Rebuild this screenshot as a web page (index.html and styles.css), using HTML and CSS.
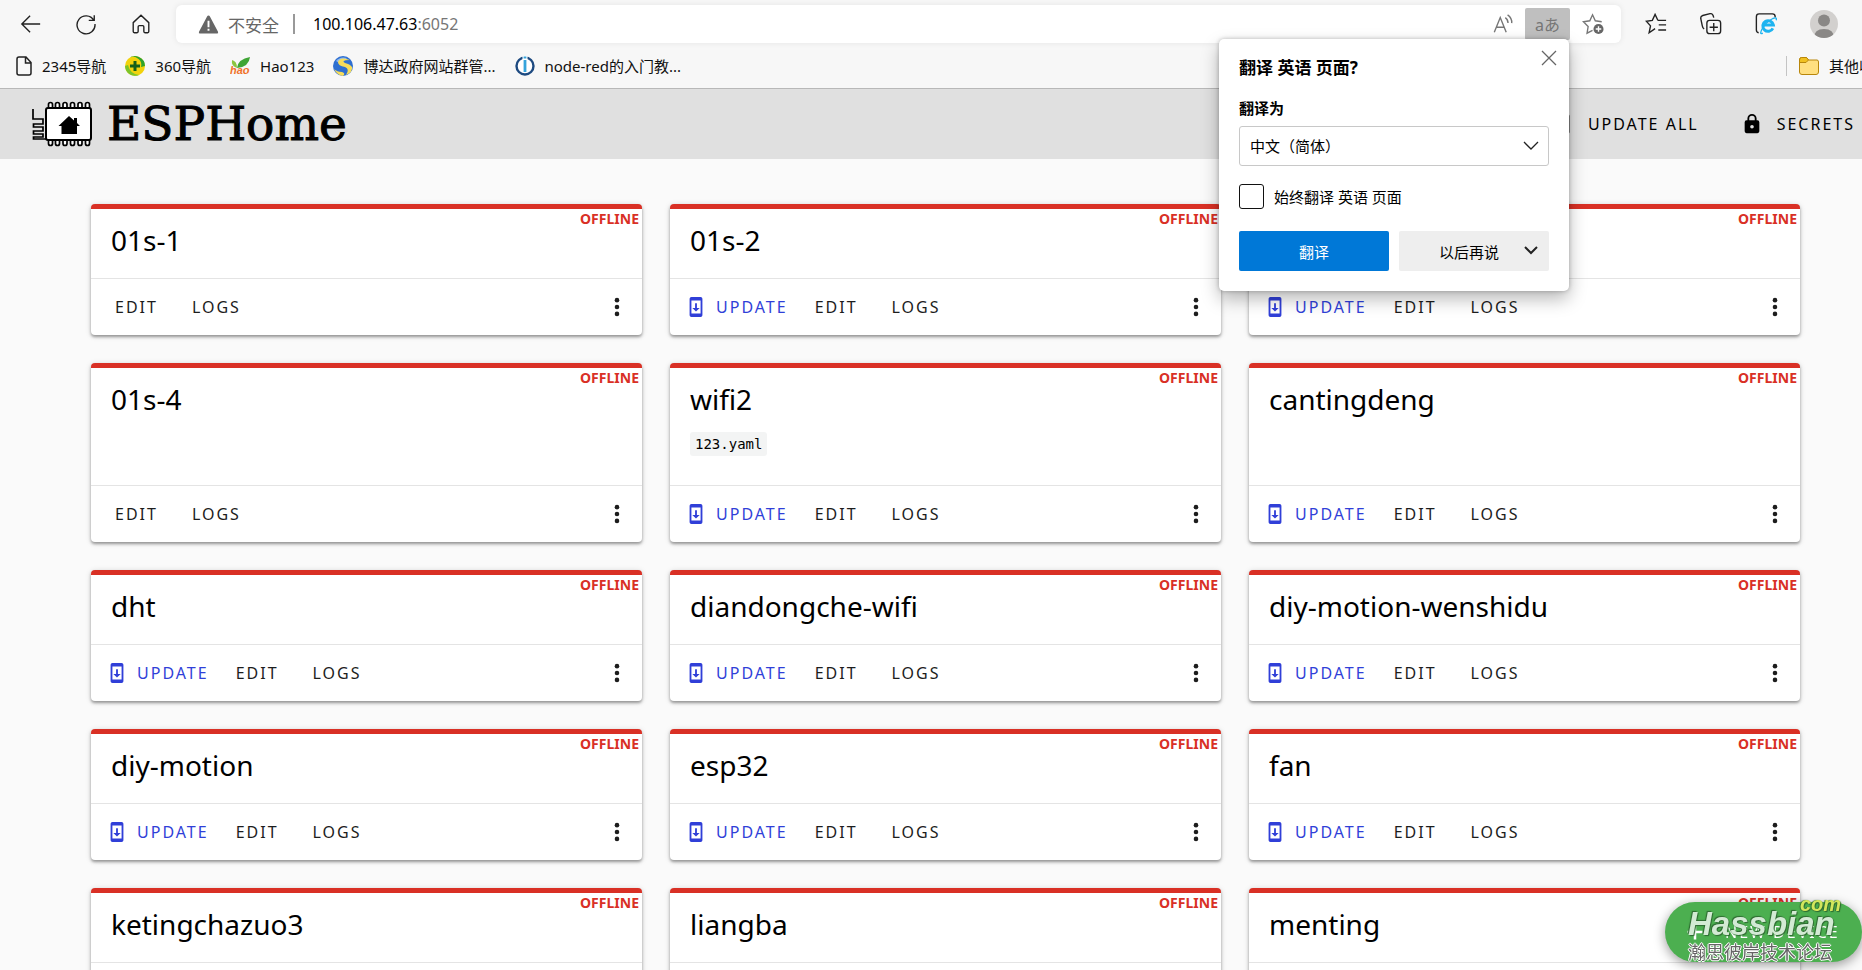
FILE: index.html
```html
<!DOCTYPE html>
<html lang="zh-CN">
<head>
<meta charset="utf-8">
<title>ESPHome</title>
<link rel="stylesheet" href="styles.css">
</head>
<body>
<svg class="defs" aria-hidden="true">
  <symbol id="i-update" viewBox="0 0 24 24"><path fill="currentColor" d="M17 1H7a2 2 0 0 0-2 2v18a2 2 0 0 0 2 2h10a2 2 0 0 0 2-2V3a2 2 0 0 0-2-2zm0 18H7V5h10v14zm-1-6h-3V8h-2v5H8l4 4 4-4z"/></symbol>
  <symbol id="i-dots" viewBox="0 0 24 24"><g fill="currentColor"><circle cx="12" cy="4.500" r="2.500"/><circle cx="12" cy="12" r="2.500"/><circle cx="12" cy="19.500" r="2.500"/></g></symbol>
</svg>

<div class="browser">
  <div class="toolbar">
    <button class="nav" aria-label="返回"><svg viewBox="0 0 24 24"><path d="M22 12H2.500M11 3l-9 9 9 9"/></svg></button>
    <button class="nav" aria-label="刷新"><svg viewBox="0 0 24 24"><path d="M20.500 8A9.800 9.800 0 1 0 21.800 12M21 2.500V8h-6"/></svg></button>
    <button class="nav" aria-label="主页"><svg viewBox="0 0 24 24"><path d="M3.500 10.500 12 2.500l8.500 8v9.800q0 1.200-1.200 1.200h-3q-1.200 0-1.200-1.200V15q0-1.200-1.200-1.200h-3.800q-1.200 0-1.200 1.200v5.300q0 1.200-1.200 1.200h-3q-1.200 0-1.200-1.200z"/></svg></button>
    <div class="address">
      <svg class="warn" viewBox="0 0 22 20"><path fill="#666" d="M11 .500q1 0 1.500 1L21 17.500q.800 2-1.200 2H2.200q-2 0-1.200-2L9.500 1.500q.500-1 1.500-1z"/><path stroke="#fff" stroke-width="2" d="M11 6v7M11 14.500v2"/></svg>
      <span class="insecure">不安全</span>
      <span class="bar"></span>
      <span class="url">100.106.47.63<span class="port">:6052</span></span>
      <button class="tool" aria-label="朗读"><svg viewBox="0 0 24 24"><path d="M2.500 21 9 5l6.500 16M5 15.500h8M14.500 5q3 2 3 6M17 2q5 3.500 4.500 9"/></svg></button>
      <button class="tool translate" aria-label="翻译">aあ</button>
      <button class="tool" aria-label="收藏"><svg viewBox="0 0 24 24"><path d="m11.500 19-6 3 1.200-7.200L1.500 9.500l7-1L11.500 2l3 6.500 7 1"/><circle cx="18" cy="17.500" r="5.500" fill="#666" stroke="none"/><path stroke="#fff" d="M18 14.500v6M15 17.500h6"/></svg></button>
    </div>
    <button class="nav" aria-label="收藏夹"><svg viewBox="0 0 24 24"><path d="m11 17-6.500 4.500L6 14 1.500 9l6.500-1L11 1.500 14 8M14 8h9M15 13h8M14.500 18.500h8.500"/></svg></button>
    <button class="nav" aria-label="集锦"><svg viewBox="0 0 24 24"><rect x="7.500" y="8" width="15" height="14.500" rx="3"/><path d="M15 11v9M10.500 15.500h9M4.500 17.500Q3 16.500 2.500 14L.800 6Q.500 3.500 3 2.700l8-2Q13.500.500 14.300 2.700l.700 2.300"/></svg></button>
    <button class="nav" aria-label="IE 模式"><svg viewBox="0 0 24 24"><path d="M4 21.500Q1.500 21 1.500 18.500V4q0-3 3-3H19q3 0 3 3v1"/><path d="M19.500 16.800A5.800 5.800 0 1 1 20 13H9.500" stroke="#1eb4f0" stroke-width="3.200"/><path d="M8.500 22q-4 2-1-4 4-8 12-12 5-2 3.500 2" stroke="#1eb4f0" stroke-width="1.500"/></svg></button>
    <button class="nav profile" aria-label="个人资料"><svg viewBox="0 0 28 28"><clipPath id="av"><circle cx="14" cy="14" r="14"/></clipPath><g clip-path="url(#av)" stroke="none"><path fill="#d2d0ce" d="M0 0h28v28H0z"/><circle cx="14" cy="10.500" r="6" fill="#8a8886"/><path fill="#8a8886" d="M4 28q0-9 10-9t10 9z"/></g></svg></button>
  </div>
  <nav class="bookmarks">
    <a href="#"><svg class="page" viewBox="0 0 16 20"><path fill="none" stroke="#222" stroke-width="1.500" d="M3 1h7l5 5.500V17q0 2-2 2H3q-2 0-2-2V3q0-2 2-2zM9.500 1v6H15"/></svg>2345导航</a>
    <a href="#"><svg viewBox="0 0 20 20"><circle cx="10" cy="10" r="10" fill="#f2d20c"/><path fill="#2fa32c" d="M3 3A10 10 0 0 1 20 10l-4 1A8 8 0 0 0 3 3z"/><path fill="#7cc42a" d="M0 10a10 10 0 0 0 14 9Q5 18 3 9z"/><path stroke="#14601a" stroke-width="3" d="M10 5v10M5 10h10"/></svg>360导航</a>
    <a href="#"><svg viewBox="0 0 20 20"><path fill="#3fa535" d="M7 12Q8 3 20 1q-1 10-13 11z"/><path fill="#8cc63f" d="M7 12Q1 10 2 4q5 1 5 8z"/><text class="hao" x="0" y="18">hao</text></svg>Hao123</a>
    <a href="#"><svg viewBox="0 0 20 20"><circle cx="10" cy="10" r="10" fill="#2f6fd0"/><path fill="#8fb9ee" d="M3 5Q7 0 14 2L8 8z"/><path fill="#f7dc5a" d="M17 4Q7 0 5 6q0 4 7 5 5 2 1 8 7-3 6-8-2-3-7-4-5-3 5-3zM1 13q3 6 9 7 3-3-1-4-5 0-8-3z"/></svg>博达政府网站群管...</a>
    <a href="#"><svg viewBox="0 0 20 20"><circle cx="10" cy="10" r="8.500" fill="#fff" stroke="#1d4a80" stroke-width="2.400"/><path stroke="#fff" stroke-width="5" d="M10 0v4"/><path stroke="#35a4dc" stroke-width="2.800" d="M10 4v12M10 .500v2"/></svg>node-red的入门教...</a>
    <a class="others" href="#"><svg viewBox="0 0 20 18"><path fill="#ffdf80" stroke="#b8860b" d="M.500 3q0-2.500 2-2.500h5L9.500 3H18q1.500 0 1.500 2v10q0 2.500-2.500 2.500H3Q.500 17.500.500 15z"/><path fill="#f0c020" stroke="#b8860b" d="M.500 5.500V3q0-2.500 2-2.500h5L9.500 3l-2.500 2.500z"/></svg>其他收藏夹</a>
  </nav>
</div>

<header class="app-header">
  <a class="brand" href="#">
    <svg viewBox="0 0 60 46"><g fill="none" stroke="#000" stroke-width="1.700"><path d="M1 8v10h10v5H1.500v3H11v4H1.500v3H11v3H1.500v2H14M11 18v5"/><g id="pins" fill="#fff"><path d="M16.500 8V3.500q0-2 2-2t2 2V8M23.500 8V3.500q0-2 2-2t2 2V8M31 8V3.500q0-2 2-2t2 2V8M38.500 8V3.500q0-2 2-2t2 2V8M46 8V3.500q0-2 2-2t2 2V8M53.500 8V3.500q0-2 2-2t2 2V8"/><path d="M16.500 38v4.500q0 2 2 2t2-2V38M23.500 38v4.500q0 2 2 2t2-2V38M31 38v4.500q0 2 2 2t2-2V38M38.500 38v4.500q0 2 2 2t2-2V38M46 38v4.500q0 2 2 2t2-2V38M53.500 38v4.500q0 2 2 2t2-2V38"/></g><rect x="14" y="7" width="45" height="32" rx="2" fill="#fff" stroke-width="2"/></g><path d="m37 15 5 4.500V17h3v5l3 3h-3v8H29.500v-8h-3z"/></svg>
    <span>ESPHome</span>
  </a>
  <div class="header-actions">
    <button><svg><use href="#i-update"/></svg>UPDATE ALL</button>
    <button><svg viewBox="0 0 24 24"><path fill="currentColor" d="M18 8h-1V6A5 5 0 0 0 7 6v2H6a2 2 0 0 0-2 2v10a2 2 0 0 0 2 2h12a2 2 0 0 0 2-2V10a2 2 0 0 0-2-2zm-6 9a2 2 0 1 1 0-4 2 2 0 0 1 0 4zm3-9H9V6a3 3 0 0 1 6 0z"/></svg>SECRETS</button>
  </div>
</header>

<main class="grid">
  <article class="card"><div class="body"><span class="status">OFFLINE</span><h2>01s-1</h2></div><div class="actions"><button>EDIT</button><button>LOGS</button><button class="more" aria-label="More"><svg><use href="#i-dots"/></svg></button></div></article>
  <article class="card"><div class="body"><span class="status">OFFLINE</span><h2>01s-2</h2></div><div class="actions"><button class="update"><svg><use href="#i-update"/></svg>UPDATE</button><button>EDIT</button><button>LOGS</button><button class="more" aria-label="More"><svg><use href="#i-dots"/></svg></button></div></article>
  <article class="card"><div class="body"><span class="status">OFFLINE</span><h2>01s-3</h2></div><div class="actions"><button class="update"><svg><use href="#i-update"/></svg>UPDATE</button><button>EDIT</button><button>LOGS</button><button class="more" aria-label="More"><svg><use href="#i-dots"/></svg></button></div></article>
  <article class="card"><div class="body"><span class="status">OFFLINE</span><h2>01s-4</h2></div><div class="actions"><button>EDIT</button><button>LOGS</button><button class="more" aria-label="More"><svg><use href="#i-dots"/></svg></button></div></article>
  <article class="card"><div class="body"><span class="status">OFFLINE</span><h2>wifi2</h2><code>123.yaml</code></div><div class="actions"><button class="update"><svg><use href="#i-update"/></svg>UPDATE</button><button>EDIT</button><button>LOGS</button><button class="more" aria-label="More"><svg><use href="#i-dots"/></svg></button></div></article>
  <article class="card"><div class="body"><span class="status">OFFLINE</span><h2>cantingdeng</h2></div><div class="actions"><button class="update"><svg><use href="#i-update"/></svg>UPDATE</button><button>EDIT</button><button>LOGS</button><button class="more" aria-label="More"><svg><use href="#i-dots"/></svg></button></div></article>
  <article class="card"><div class="body"><span class="status">OFFLINE</span><h2>dht</h2></div><div class="actions"><button class="update"><svg><use href="#i-update"/></svg>UPDATE</button><button>EDIT</button><button>LOGS</button><button class="more" aria-label="More"><svg><use href="#i-dots"/></svg></button></div></article>
  <article class="card"><div class="body"><span class="status">OFFLINE</span><h2>diandongche-wifi</h2></div><div class="actions"><button class="update"><svg><use href="#i-update"/></svg>UPDATE</button><button>EDIT</button><button>LOGS</button><button class="more" aria-label="More"><svg><use href="#i-dots"/></svg></button></div></article>
  <article class="card"><div class="body"><span class="status">OFFLINE</span><h2>diy-motion-wenshidu</h2></div><div class="actions"><button class="update"><svg><use href="#i-update"/></svg>UPDATE</button><button>EDIT</button><button>LOGS</button><button class="more" aria-label="More"><svg><use href="#i-dots"/></svg></button></div></article>
  <article class="card"><div class="body"><span class="status">OFFLINE</span><h2>diy-motion</h2></div><div class="actions"><button class="update"><svg><use href="#i-update"/></svg>UPDATE</button><button>EDIT</button><button>LOGS</button><button class="more" aria-label="More"><svg><use href="#i-dots"/></svg></button></div></article>
  <article class="card"><div class="body"><span class="status">OFFLINE</span><h2>esp32</h2></div><div class="actions"><button class="update"><svg><use href="#i-update"/></svg>UPDATE</button><button>EDIT</button><button>LOGS</button><button class="more" aria-label="More"><svg><use href="#i-dots"/></svg></button></div></article>
  <article class="card"><div class="body"><span class="status">OFFLINE</span><h2>fan</h2></div><div class="actions"><button class="update"><svg><use href="#i-update"/></svg>UPDATE</button><button>EDIT</button><button>LOGS</button><button class="more" aria-label="More"><svg><use href="#i-dots"/></svg></button></div></article>
  <article class="card"><div class="body"><span class="status">OFFLINE</span><h2>ketingchazuo3</h2></div><div class="actions"></div></article>
  <article class="card"><div class="body"><span class="status">OFFLINE</span><h2>liangba</h2></div><div class="actions"></div></article>
  <article class="card"><div class="body"><span class="status">OFFLINE</span><h2>menting</h2></div><div class="actions"></div></article>
</main>

<button class="fab">
  <svg viewBox="0 0 24 24"><path stroke="#fff" stroke-width="3" d="M12 3v18M3 12h18"/></svg>NEW DEVICE
</button>
<div class="watermark"><span class="com">com</span><span class="name">Hassbian</span><span class="forum">瀚思彼岸技术论坛</span></div>

<section class="popup" role="dialog" aria-labelledby="pt">
  <button class="close" aria-label="关闭"><svg viewBox="0 0 16 16"><path d="m1 1 14 14M15 1 1 15"/></svg></button>
  <h1 id="pt">翻译 英语 页面?</h1>
  <label class="field-label" for="lang">翻译为</label>
  <div class="select"><select id="lang"><option>中文（简体）</option></select><svg viewBox="0 0 16 10"><path d="m1 1 7 7 7-7"/></svg></div>
  <label class="check"><input type="checkbox">始终翻译 英语 页面</label>
  <div class="buttons"><button class="primary">翻译</button><button class="later"><span>以后再说</span><svg viewBox="0 0 16 10"><path d="m2 1 6 6 6-6"/></svg></button></div>
</section>
</body>
</html>
```

FILE: styles.css
```css
* { box-sizing: border-box; }
html, body { height: 100%; }
body {
  margin: 0;
  overflow: hidden;
  background: #fafafa;
  color: #000;
  font-family: "Noto Sans", "Noto Sans CJK SC", sans-serif;
  font-size: 15px;
}
button {
  display: flex;
  align-items: center;
  padding: 0;
  border: 0;
  background: none;
  color: inherit;
  font: inherit;
  white-space: nowrap;
}
svg { flex: none; }
.defs { position: absolute; width: 0; height: 0; }

/* Browser chrome */
.browser {
  background: #f7f7f7;
  border-bottom: 1px solid #b8b8b8;
}
.toolbar {
  display: flex;
  align-items: center;
  padding: 5px 7px 0 3px;
}
.nav { justify-content: center; width: 55px; height: 36px; }
.nav svg, .tool svg {
  width: 22px;
  height: 22px;
  fill: none;
  stroke: #222;
  stroke-width: 1.5;
}
.profile { width: 62px; }
.toolbar .profile svg { width: 28px; height: 28px; }
.address {
  flex: 1;
  display: flex;
  align-items: center;
  height: 38px;
  margin: 0 7px 0 8px;
  padding: 0 6px 0 22px;
  background: #fff;
  border-radius: 6px;
  box-shadow: 0 0 6px rgba(0, 0, 0, .08);
}
.warn { width: 21px; height: 19px; }
.insecure { margin-left: 9px; color: #666; font-size: 17px; }
.bar { width: 2px; height: 20px; margin: 0 18px 0 14px; background: #999; }
.url { flex: 1; font-size: 16px; }
.port { color: #767676; }
.tool { justify-content: center; width: 45px; height: 32px; color: #767676; }
.tool svg { stroke: #767676; }
.translate { background: #bfbfbf; border-radius: 2px; font-size: 16px; }
.bookmarks {
  display: flex;
  align-items: center;
  gap: 19px;
  height: 45px;
  padding-left: 16px;
  overflow: hidden;
}
.bookmarks a {
  flex: none;
  display: flex;
  align-items: center;
  gap: 10px;
  color: #111;
  text-decoration: none;
}
.bookmarks svg { width: 20px; height: 20px; }
.bookmarks .page { width: 16px; }
.hao { font: bold italic 11px "Liberation Sans", sans-serif; fill: #f0722a; }
.bookmarks .others {
  width: 76px;
  height: 20px;
  margin-left: auto;
  padding-left: 12px;
  border-left: 1px solid #c4c4c4;
  white-space: nowrap;
}

/* App header */
.app-header {
  display: flex;
  align-items: center;
  justify-content: space-between;
  height: 70px;
  padding: 0 7px 0 32px;
  background: #e0e0e0;
}
.brand {
  display: flex;
  align-items: center;
  gap: 15px;
  color: #000;
  text-decoration: none;
  font-family: "DejaVu Serif", serif;
  font-size: 47px;
  line-height: 60px;
  -webkit-text-stroke: 1px #000;
}
.brand svg { width: 60px; height: 46px; }
.header-actions { display: flex; gap: 42px; }
.header-actions button { gap: 14px; font-size: 16px; letter-spacing: 2px; }
.header-actions svg { width: 22px; height: 22px; }

/* Device cards */
.grid {
  display: grid;
  grid-template-columns: repeat(3, 1fr);
  gap: 28px;
  padding: 45px 62px 28px 91px;
}
.card {
  display: flex;
  flex-direction: column;
  background: #fff;
  border-top: 5px solid #d93025;
  border-radius: 4px;
  box-shadow: 0 2px 3px rgba(0, 0, 0, .35), 0 1px 6px rgba(0, 0, 0, .14);
}
.body { position: relative; flex: 1; padding: 11px 20px 18px; }
.status {
  position: absolute;
  top: 0;
  right: 3px;
  color: #d93025;
  font-size: 14px;
  font-weight: 700;
  line-height: 20px;
}
.card h2 { margin: 0; font-size: 28px; font-weight: 400; line-height: 40px; }
.card code {
  display: block;
  width: max-content;
  margin: 13px 0 11px;
  padding: 0 5px;
  background: #f3f4f4;
  border-radius: 3px;
  font-family: "DejaVu Sans Mono", monospace;
  font-size: 14px;
  line-height: 24px;
}
.actions {
  display: flex;
  align-items: center;
  gap: 34px;
  height: 57px;
  padding: 0 14px 0 24px;
  border-top: 1px solid #e4e4e4;
  color: #1d1d1d;
}
.actions button { font-size: 16px; letter-spacing: 2px; }
.actions .update { gap: 9px; margin: 0 -7px 0 -9px; color: #303fd8; }
.actions svg { width: 22px; height: 22px; }
.actions .more { margin-left: auto; letter-spacing: 0; }

/* New device button and forum mark */
.fab {
  position: fixed;
  right: 0;
  bottom: 8px;
  gap: 20px;
  width: 197px;
  height: 60px;
  padding-left: 20px;
  background: #4caf50;
  border-radius: 30px;
  box-shadow: 0 3px 12px rgba(0, 0, 0, .4);
  color: #fff;
  font-size: 16px;
  letter-spacing: 2px;
}
.fab svg { width: 20px; height: 20px; }
.watermark {
  position: fixed;
  right: 26px;
  bottom: 6px;
  display: flex;
  flex-direction: column;
  width: 148px;
  font-family: "Liberation Sans", "Noto Sans CJK SC", sans-serif;
}
.com {
  margin: 0 -5px -8px 0;
  color: #d2e65c;
  font-size: 20px;
  font-style: italic;
  font-weight: 700;
  line-height: 20px;
  text-align: right;
  text-shadow: 1px 1px 1px #2d6a30, -1px 0 1px #2d6a30;
}
.name {
  color: #d3ead4;
  font-size: 33px;
  font-style: italic;
  font-weight: 700;
  line-height: 36px;
  text-shadow: 1px 1px 1px #2d6a30, -1px -1px 1px #2d6a30;
}
.forum {
  color: #666;
  font-size: 18px;
  line-height: 22px;
  text-shadow: 1px 0 0 #fff, -1px 0 0 #fff, 0 1px 0 #fff, 0 -1px 0 #fff;
}

/* Translate popup */
.popup {
  position: absolute;
  top: 39px;
  right: 293px;
  width: 350px;
  padding: 13px 20px 20px;
  background: #fff;
  border-radius: 5px;
  box-shadow: 0 8px 18px rgba(0, 0, 0, .28), 0 0 4px rgba(0, 0, 0, .25);
}
.popup svg { fill: none; stroke: #222; stroke-width: 1.300; }
.close { position: absolute; top: 11px; right: 12px; }
.popup .close svg { width: 16px; height: 16px; stroke: #666; }
.popup h1 { margin: 0 0 12px; font-size: 17px; line-height: 32px; }
.field-label { display: block; margin-bottom: 6px; font-weight: 700; line-height: 24px; }
.select { position: relative; }
.select select {
  display: block;
  width: 100%;
  height: 40px;
  padding: 0 10px;
  border: 1px solid #c8c8c8;
  border-radius: 3px;
  background: #fff;
  color: #000;
  font: inherit;
  appearance: none;
}
.select svg { position: absolute; top: 15px; right: 10px; width: 16px; height: 10px; }
.check { display: flex; align-items: center; gap: 10px; height: 25px; margin: 18px 0 22px; }
.check input {
  width: 25px;
  height: 25px;
  margin: 0;
  border: 1px solid #111;
  border-radius: 3px;
  background: #fff;
  appearance: none;
}
.buttons { display: grid; grid-template-columns: 1fr 1fr; gap: 10px; }
.buttons button { justify-content: center; height: 40px; border-radius: 2px; }
.buttons .primary { background: #0078d7; color: #fff; }
.buttons .later { justify-content: flex-end; gap: 24px; padding: 0 10px; background: #eee; }
.popup .later svg { width: 16px; height: 10px; stroke-width: 2; }
```
